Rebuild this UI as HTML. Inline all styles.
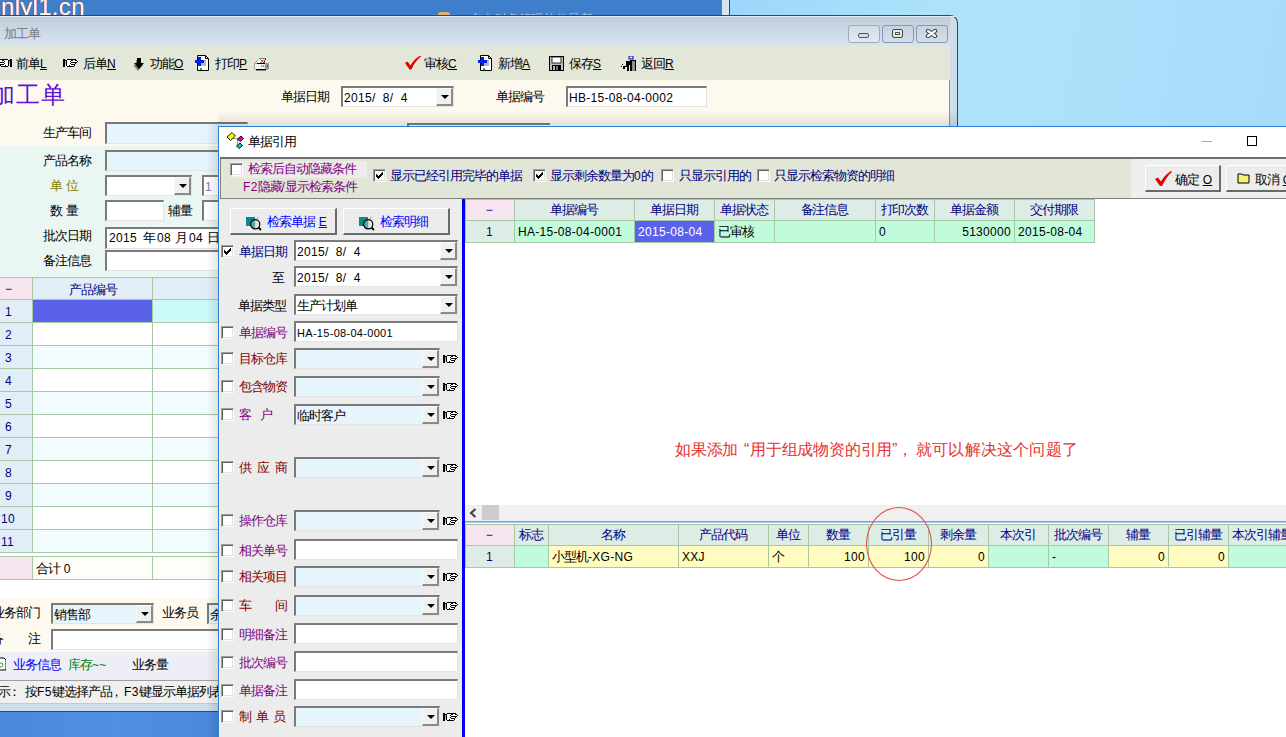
<!DOCTYPE html>
<html><head><meta charset="utf-8"><style>
*{box-sizing:border-box;margin:0;padding:0}
html,body{width:1286px;height:737px;overflow:hidden;position:relative;font-family:"Liberation Sans",sans-serif;font-size:12px;color:#000;background:#3d7ccc}
.a{position:absolute}
.t{position:absolute;white-space:nowrap;line-height:14px;letter-spacing:0.3px}
.inp{position:absolute;background:#fff;border-top:2px solid #7a7a7a;border-left:2px solid #7a7a7a;border-bottom:1px solid #e4e4e4;border-right:1px solid #e4e4e4;overflow:hidden;white-space:nowrap;line-height:20px;padding-left:1px;letter-spacing:0.3px}
.lb{background:#e6f4fc}
.btn{position:absolute;top:0;bottom:0;right:0;width:17px;background:#f0f0f0;border-top:1px solid #fafafa;border-left:1px solid #fafafa;border-right:2px solid #8a8a8a;border-bottom:2px solid #8a8a8a}
.btn:after{content:"";position:absolute;left:4px;top:6px;border-left:4px solid transparent;border-right:4px solid transparent;border-top:4px solid #000}
.cb{position:absolute;width:13px;height:13px;background:#fff;border:1px solid #fcfcfc;border-top-color:#a0a0a0;border-left-color:#a0a0a0;box-shadow:inset 1px 1px 0 #606060,inset -1px -1px 0 #e0e0e0}
u{text-decoration:underline}
.c{font-size:1.0833em;letter-spacing:-0.077em}
</style></head><body>
<div class="a" style="left:0px;top:0px;width:722px;height:15px;background:#3f7ecb"></div>
<div class="a" style="left:722px;top:0px;width:7px;height:15px;background:#d8e4f0"></div>
<div class="a" style="left:729px;top:0px;width:1px;height:15px;background:#444"></div>
<div class="a" style="left:730px;top:0px;width:556px;height:126px;background:linear-gradient(100deg,#9cd6fa,#aee4fa 40%,#a6dcfa)"></div>
<div class="t" style="left:1px;top:-7px;font-size:24px;line-height:28px;color:#fffbe0;text-shadow:-0.5px 0 #e03040">nlyl1.cn</div>
<div class="a" style="left:438px;top:12px;width:12px;height:3px;background:#e8b070;border-radius:5px 5px 0 0"></div>
<div class="a" style="left:470px;top:12px;width:130px;height:3px;overflow:hidden"><div class="t" style="left:0;top:0;color:#b8cce8">点击财务管理软件最新</div></div>
<div class="a" style="left:0px;top:712px;width:230px;height:25px;background:linear-gradient(90deg,#4a88dc,#5090e0 50%,#4a88da)"></div>
<div class="a" style="left:0px;top:15px;width:958px;height:697px;background:#cfdcea;border:1px solid #444;border-left:none;border-radius:0 8px 0 0"></div>
<div class="a" style="left:0px;top:16px;width:956px;height:1px;background:#e4ecf4"></div>
<div class="a" style="left:0px;top:17px;width:950px;height:29px;background:linear-gradient(#bfcddb,#d8e4f0)"></div>
<div class="t" style="left:4px;top:27px;color:#7a7a7a"><span class="c">加工单</span></div>
<div class="a" style="left:848px;top:25px;width:32px;height:18px;border:1px solid #a0acbc;border-radius:3px;background:linear-gradient(#d2dde8,#dfe9f3)"></div>
<div class="a" style="left:858px;top:33px;width:11px;height:5px;border:1px solid #555;border-radius:2px;background:#ddd"></div>
<div class="a" style="left:882px;top:25px;width:32px;height:18px;border:1px solid #8a98ae;border-radius:3px;background:linear-gradient(#c6d2e0,#d4dfec)"></div>
<div class="a" style="left:892px;top:29px;width:11px;height:9px;border:1px solid #444;border-radius:2px;background:#e8e8e8"></div>
<div class="a" style="left:895px;top:32px;width:5px;height:3px;border:1px solid #555;background:#dde4ec"></div>
<div class="a" style="left:916px;top:25px;width:32px;height:18px;border:1px solid #8a98ae;border-radius:3px;background:linear-gradient(#c6d2e0,#d4dfec)"></div>
<svg class="a" style="left:925px;top:28px" width="13" height="11" viewBox="0 0 13 11"><path d="M3 3L10 8M10 3L3 8" stroke="#3c4450" stroke-width="4.4" stroke-linecap="round"/><path d="M3 3L10 8M10 3L3 8" stroke="#fafafa" stroke-width="2.2" stroke-linecap="round"/></svg>
<div class="a" style="left:0px;top:46px;width:950px;height:34px;background:#e3e7d7"></div>
<svg class="a" style="left:-4px;top:59px" width="16" height="8" viewBox="0 0 16 8" shape-rendering="crispEdges"><rect x="3" y="0" width="9" height="1" fill="#000"/><rect x="14" y="0" width="2" height="1" fill="#000"/><rect x="2" y="1" width="2" height="1" fill="#000"/><rect x="4" y="1" width="2" height="1" fill="#fff"/><rect x="6" y="1" width="2" height="1" fill="#000"/><rect x="8" y="1" width="4" height="1" fill="#fff"/><rect x="12" y="1" width="4" height="1" fill="#000"/><rect x="1" y="2" width="1" height="1" fill="#000"/><rect x="2" y="2" width="6" height="1" fill="#fff"/><rect x="8" y="2" width="1" height="1" fill="#000"/><rect x="9" y="2" width="3" height="1" fill="#fff"/><rect x="12" y="2" width="1" height="1" fill="#000"/><rect x="13" y="2" width="1" height="1" fill="#10f0f8"/><rect x="14" y="2" width="2" height="1" fill="#000"/><rect x="2" y="3" width="6" height="1" fill="#000"/><rect x="8" y="3" width="4" height="1" fill="#fff"/><rect x="12" y="3" width="1" height="1" fill="#000"/><rect x="13" y="3" width="1" height="1" fill="#10f0f8"/><rect x="14" y="3" width="2" height="1" fill="#000"/><rect x="3" y="4" width="1" height="1" fill="#000"/><rect x="4" y="4" width="4" height="1" fill="#fff"/><rect x="8" y="4" width="1" height="1" fill="#000"/><rect x="9" y="4" width="3" height="1" fill="#fff"/><rect x="12" y="4" width="1" height="1" fill="#000"/><rect x="13" y="4" width="1" height="1" fill="#10f0f8"/><rect x="14" y="4" width="2" height="1" fill="#000"/><rect x="4" y="5" width="4" height="1" fill="#000"/><rect x="8" y="5" width="4" height="1" fill="#fff"/><rect x="12" y="5" width="1" height="1" fill="#000"/><rect x="13" y="5" width="1" height="1" fill="#e0b0b0"/><rect x="14" y="5" width="2" height="1" fill="#000"/><rect x="4" y="6" width="1" height="1" fill="#000"/><rect x="5" y="6" width="4" height="1" fill="#fff"/><rect x="9" y="6" width="1" height="1" fill="#000"/><rect x="10" y="6" width="2" height="1" fill="#fff"/><rect x="12" y="6" width="1" height="1" fill="#000"/><rect x="14" y="6" width="2" height="1" fill="#000"/><rect x="5" y="7" width="7" height="1" fill="#000"/><rect x="14" y="7" width="2" height="1" fill="#000"/></svg>
<div class="t" style="left:16px;top:57px;"><span class="c">前单</span><u>L</u></div>
<svg class="a" style="left:63px;top:59px" width="16" height="8" viewBox="0 0 16 8" shape-rendering="crispEdges"><rect x="0" y="0" width="2" height="1" fill="#000"/><rect x="4" y="0" width="9" height="1" fill="#000"/><rect x="0" y="1" width="4" height="1" fill="#000"/><rect x="4" y="1" width="4" height="1" fill="#fff"/><rect x="8" y="1" width="2" height="1" fill="#000"/><rect x="10" y="1" width="2" height="1" fill="#fff"/><rect x="12" y="1" width="2" height="1" fill="#000"/><rect x="0" y="2" width="2" height="1" fill="#000"/><rect x="2" y="2" width="1" height="1" fill="#10f0f8"/><rect x="3" y="2" width="1" height="1" fill="#000"/><rect x="4" y="2" width="3" height="1" fill="#fff"/><rect x="7" y="2" width="1" height="1" fill="#000"/><rect x="8" y="2" width="6" height="1" fill="#fff"/><rect x="14" y="2" width="1" height="1" fill="#000"/><rect x="0" y="3" width="2" height="1" fill="#000"/><rect x="2" y="3" width="1" height="1" fill="#10f0f8"/><rect x="3" y="3" width="1" height="1" fill="#000"/><rect x="4" y="3" width="4" height="1" fill="#fff"/><rect x="8" y="3" width="6" height="1" fill="#000"/><rect x="0" y="4" width="2" height="1" fill="#000"/><rect x="2" y="4" width="1" height="1" fill="#10f0f8"/><rect x="3" y="4" width="1" height="1" fill="#000"/><rect x="4" y="4" width="3" height="1" fill="#fff"/><rect x="7" y="4" width="1" height="1" fill="#000"/><rect x="8" y="4" width="4" height="1" fill="#fff"/><rect x="12" y="4" width="1" height="1" fill="#000"/><rect x="0" y="5" width="2" height="1" fill="#000"/><rect x="2" y="5" width="1" height="1" fill="#e0b0b0"/><rect x="3" y="5" width="1" height="1" fill="#000"/><rect x="4" y="5" width="4" height="1" fill="#fff"/><rect x="8" y="5" width="4" height="1" fill="#000"/><rect x="0" y="6" width="2" height="1" fill="#000"/><rect x="3" y="6" width="1" height="1" fill="#000"/><rect x="4" y="6" width="2" height="1" fill="#fff"/><rect x="6" y="6" width="1" height="1" fill="#000"/><rect x="7" y="6" width="4" height="1" fill="#fff"/><rect x="11" y="6" width="1" height="1" fill="#000"/><rect x="0" y="7" width="2" height="1" fill="#000"/><rect x="4" y="7" width="7" height="1" fill="#000"/></svg>
<div class="t" style="left:83px;top:57px;"><span class="c">后单</span><u>N</u></div>
<svg class="a" style="left:132px;top:58px" width="14" height="13" viewBox="0 0 14 13"><path d="M5 1h4v5h3l-5 6l-5-6h3z" fill="#808080" transform="translate(-1,1)"/><path d="M5 0h4v5h3l-5 6l-5-6h3z" fill="#000"/></svg>
<div class="t" style="left:150px;top:57px;"><span class="c">功能</span><u>O</u></div>
<svg class="a" style="left:195px;top:55px" width="15" height="16" viewBox="0 0 15 16"><path d="M2.5 0.5h8l3 3v12h-11z" fill="#fff" stroke="#000"/><path d="M10.5 0.5v3h3" fill="none" stroke="#000"/><rect x="5" y="5" width="6" height="6" fill="#b8b8b8"/><rect x="3" y="2" width="3" height="9" fill="#0020f0"/><rect x="0" y="5" width="9" height="3" fill="#0020f0"/><rect x="5" y="13" width="2" height="2" fill="#20c020"/></svg>
<div class="t" style="left:215px;top:57px;"><span class="c">打印</span><u>P</u></div>
<svg class="a" style="left:253px;top:57px" width="17" height="14" viewBox="0 0 17 14"><path d="M6 2h7l-1 4.5h-8z" fill="#fff"/><path d="M6 1.5h7" stroke="#808080"/><path d="M5.5 2L1.5 6.5" stroke="#a0a0a0"/><path d="M7.5 2.5l3.5 3.5M11 2.5l-3.5 3.5" stroke="#f00" stroke-width="1"/><rect x="12" y="2" width="1" height="1" fill="#000"/><rect x="11" y="3.5" width="1" height="2" fill="#000"/><rect x="1.5" y="6.5" width="14" height="6" rx="1.2" fill="#f4f4f4" stroke="#a0a0a0"/><rect x="4" y="6" width="8" height="1" fill="#000"/><rect x="12" y="6" width="4" height="6" fill="#9a9a9a"/><rect x="14" y="8.5" width="1" height="1" fill="#000"/><rect x="3" y="12" width="10" height="1.4" fill="#000"/><rect x="8" y="8.5" width="1.2" height="1.2" fill="#f00"/><rect x="10" y="8.5" width="1.2" height="1.2" fill="#f00"/></svg>
<svg class="a" style="left:405px;top:56px" width="16" height="14" viewBox="0 0 16 14"><path d="M0 7l2.5-1.5l3 4c3-5 6-8 10-10l0.5 1c-4 3-7 7-9.5 13h-2z" fill="#e80000"/></svg>
<div class="t" style="left:424px;top:57px;"><span class="c">审核</span><u>C</u></div>
<svg class="a" style="left:478px;top:55px" width="15" height="16" viewBox="0 0 15 16"><path d="M2.5 0.5h8l3 3v12h-11z" fill="#fff" stroke="#000"/><path d="M10.5 0.5v3h3" fill="none" stroke="#000"/><rect x="5" y="5" width="6" height="6" fill="#b8b8b8"/><rect x="3" y="2" width="3" height="9" fill="#0020f0"/><rect x="0" y="5" width="9" height="3" fill="#0020f0"/><rect x="5" y="13" width="2" height="2" fill="#20c020"/></svg>
<div class="t" style="left:498px;top:57px;"><span class="c">新增</span><u>A</u></div>
<svg class="a" style="left:549px;top:56px" width="15" height="15" viewBox="0 0 15 15"><rect x="0.5" y="0.5" width="14" height="14" fill="#c0c0c0" stroke="#000"/><rect x="3" y="1" width="9" height="6" fill="#fff" stroke="#000" stroke-width="0.8"/><rect x="3" y="9" width="9" height="5" fill="#000"/><rect x="4" y="10" width="2" height="4" fill="#b0b0b0"/><rect x="7" y="10" width="2" height="4" fill="#707070"/></svg>
<div class="t" style="left:569px;top:57px;"><span class="c">保存</span><u>S</u></div>
<svg class="a" style="left:621px;top:56px" width="15" height="15" viewBox="0 0 15 15"><rect x="8" y="0" width="4" height="3" fill="none" stroke="#0010c0"/><rect x="9" y="4" width="6" height="11" fill="#000"/><rect x="11" y="5" width="3" height="10" fill="#909090"/><path d="M5 5h4v4h-1v6h-2v-4h-2v2h-2v-3h3z" fill="#000"/><rect x="0" y="10" width="1" height="1" fill="#000"/><rect x="1" y="8" width="1" height="1" fill="#000"/></svg>
<div class="t" style="left:641px;top:57px;"><span class="c">返回</span><u>R</u></div>
<div class="a" style="left:0px;top:80px;width:950px;height:66px;background:#fdf9ee"></div>
<div class="a" style="left:0px;top:146px;width:950px;height:132px;background:#eaf6f1"></div>
<div class="a" style="left:949px;top:80px;width:1px;height:46px;background:#909090"></div>
<div class="t" style="left:-9px;top:81px;font-size:24px;line-height:28px;color:#6010d8;letter-spacing:1px">加工单</div>
<div class="t" style="left:281px;top:90px;"><span class="c">单据日期</span></div>
<div class="inp" style="left:341px;top:86px;width:113px;height:21px">2015/&nbsp; 8/&nbsp; 4<div class="btn"></div></div>
<div class="t" style="left:496px;top:90px;"><span class="c">单据编号</span></div>
<div class="inp" style="left:566px;top:86px;width:141px;height:21px">HB-15-08-04-0002</div>
<div class="a" style="left:407px;top:123px;width:143px;height:4px;border-top:2px solid #7c7c7c;border-left:2px solid #7c7c7c;background:#fff"></div>
<div class="t" style="left:43px;top:126px;"><span class="c">生产车间</span></div>
<div class="inp lb" style="left:105px;top:122px;width:143px;height:22px"></div>
<div class="t" style="left:43px;top:154px;"><span class="c">产品名称</span></div>
<div class="inp lb" style="left:105px;top:150px;width:143px;height:21px"></div>
<div class="t" style="left:50px;top:179px;color:#808000"><span class="c">单</span> <span class="c">位</span></div>
<div class="inp" style="left:105px;top:175px;width:87px;height:21px"><div class="btn"></div></div>
<div class="inp" style="left:202px;top:175px;width:30px;height:21px;color:#8878a8">1</div>
<div class="t" style="left:50px;top:204px;"><span class="c">数</span> <span class="c">量</span></div>
<div class="inp" style="left:105px;top:200px;width:59px;height:21px"></div>
<div class="t" style="left:168px;top:204px;"><span class="c">辅量</span></div>
<div class="inp" style="left:202px;top:200px;width:30px;height:21px"></div>
<div class="t" style="left:43px;top:229px;"><span class="c">批次日期</span></div>
<div class="inp" style="left:105px;top:227px;width:143px;height:22px"></div>
<div class="t" style="left:109px;top:231px;">2015</div>
<div class="t" style="left:143px;top:231px;"><span class="c">年</span></div>
<div class="t" style="left:157px;top:231px;">08</div>
<div class="t" style="left:175px;top:231px;"><span class="c">月</span></div>
<div class="t" style="left:189px;top:231px;">04</div>
<div class="t" style="left:207px;top:231px;"><span class="c">日</span></div>
<div class="t" style="left:43px;top:254px;"><span class="c">备注信息</span></div>
<div class="inp" style="left:105px;top:250px;width:143px;height:21px"></div>
<div class="a" style="left:0px;top:277px;width:950px;height:321px;background:#fff"></div>
<div class="a" style="left:0px;top:277px;width:253px;height:1px;background:#a6c8a6"></div>
<div class="a" style="left:0px;top:278px;width:33px;height:22px;background:#f6e4ee;border-right:1px solid #a6c8a6;border-bottom:1px solid #a6c8a6"></div>
<div class="t" style="left:5px;top:282px;color:#000080">−</div>
<div class="a" style="left:33px;top:278px;width:120px;height:22px;background:#e2eef6;border-right:1px solid #a6c8a6;border-bottom:1px solid #a6c8a6"></div>
<div class="t" style="left:69px;top:283px;color:#000080"><span class="c">产品编号</span></div>
<div class="a" style="left:153px;top:278px;width:100px;height:22px;background:#e2eef6;border-bottom:1px solid #a6c8a6"></div>
<div class="a" style="left:0px;top:300px;width:33px;height:23px;background:#e2eef6;border-right:1px solid #a6c8a6;border-bottom:1px solid #a6c8a6"></div>
<div class="t" style="left:5px;top:305px;color:#000080">1</div>
<div class="a" style="left:33px;top:300px;width:120px;height:23px;background:#5a62ea;border-right:1px solid #a6c8a6;border-bottom:1px solid #a6c8a6"></div>
<div class="a" style="left:153px;top:300px;width:100px;height:23px;background:#ccfaf8;border-bottom:1px solid #a6c8a6"></div>
<div class="a" style="left:0px;top:323px;width:33px;height:23px;background:#e2eef6;border-right:1px solid #a6c8a6;border-bottom:1px solid #a6c8a6"></div>
<div class="t" style="left:5px;top:328px;color:#000080">2</div>
<div class="a" style="left:33px;top:323px;width:120px;height:23px;background:#fff;border-right:1px solid #a6c8a6;border-bottom:1px solid #a6c8a6"></div>
<div class="a" style="left:153px;top:323px;width:100px;height:23px;background:#fff;border-bottom:1px solid #a6c8a6"></div>
<div class="a" style="left:0px;top:346px;width:33px;height:23px;background:#e2eef6;border-right:1px solid #a6c8a6;border-bottom:1px solid #a6c8a6"></div>
<div class="t" style="left:5px;top:351px;color:#000080">3</div>
<div class="a" style="left:33px;top:346px;width:120px;height:23px;background:#f2fcfe;border-right:1px solid #a6c8a6;border-bottom:1px solid #a6c8a6"></div>
<div class="a" style="left:153px;top:346px;width:100px;height:23px;background:#f2fcfe;border-bottom:1px solid #a6c8a6"></div>
<div class="a" style="left:0px;top:369px;width:33px;height:23px;background:#e2eef6;border-right:1px solid #a6c8a6;border-bottom:1px solid #a6c8a6"></div>
<div class="t" style="left:5px;top:374px;color:#000080">4</div>
<div class="a" style="left:33px;top:369px;width:120px;height:23px;background:#fff;border-right:1px solid #a6c8a6;border-bottom:1px solid #a6c8a6"></div>
<div class="a" style="left:153px;top:369px;width:100px;height:23px;background:#fff;border-bottom:1px solid #a6c8a6"></div>
<div class="a" style="left:0px;top:392px;width:33px;height:23px;background:#e2eef6;border-right:1px solid #a6c8a6;border-bottom:1px solid #a6c8a6"></div>
<div class="t" style="left:5px;top:397px;color:#000080">5</div>
<div class="a" style="left:33px;top:392px;width:120px;height:23px;background:#f2fcfe;border-right:1px solid #a6c8a6;border-bottom:1px solid #a6c8a6"></div>
<div class="a" style="left:153px;top:392px;width:100px;height:23px;background:#f2fcfe;border-bottom:1px solid #a6c8a6"></div>
<div class="a" style="left:0px;top:415px;width:33px;height:23px;background:#e2eef6;border-right:1px solid #a6c8a6;border-bottom:1px solid #a6c8a6"></div>
<div class="t" style="left:5px;top:420px;color:#000080">6</div>
<div class="a" style="left:33px;top:415px;width:120px;height:23px;background:#fff;border-right:1px solid #a6c8a6;border-bottom:1px solid #a6c8a6"></div>
<div class="a" style="left:153px;top:415px;width:100px;height:23px;background:#fff;border-bottom:1px solid #a6c8a6"></div>
<div class="a" style="left:0px;top:438px;width:33px;height:23px;background:#e2eef6;border-right:1px solid #a6c8a6;border-bottom:1px solid #a6c8a6"></div>
<div class="t" style="left:5px;top:443px;color:#000080">7</div>
<div class="a" style="left:33px;top:438px;width:120px;height:23px;background:#f2fcfe;border-right:1px solid #a6c8a6;border-bottom:1px solid #a6c8a6"></div>
<div class="a" style="left:153px;top:438px;width:100px;height:23px;background:#f2fcfe;border-bottom:1px solid #a6c8a6"></div>
<div class="a" style="left:0px;top:461px;width:33px;height:23px;background:#e2eef6;border-right:1px solid #a6c8a6;border-bottom:1px solid #a6c8a6"></div>
<div class="t" style="left:5px;top:466px;color:#000080">8</div>
<div class="a" style="left:33px;top:461px;width:120px;height:23px;background:#fff;border-right:1px solid #a6c8a6;border-bottom:1px solid #a6c8a6"></div>
<div class="a" style="left:153px;top:461px;width:100px;height:23px;background:#fff;border-bottom:1px solid #a6c8a6"></div>
<div class="a" style="left:0px;top:484px;width:33px;height:23px;background:#e2eef6;border-right:1px solid #a6c8a6;border-bottom:1px solid #a6c8a6"></div>
<div class="t" style="left:5px;top:489px;color:#000080">9</div>
<div class="a" style="left:33px;top:484px;width:120px;height:23px;background:#f2fcfe;border-right:1px solid #a6c8a6;border-bottom:1px solid #a6c8a6"></div>
<div class="a" style="left:153px;top:484px;width:100px;height:23px;background:#f2fcfe;border-bottom:1px solid #a6c8a6"></div>
<div class="a" style="left:0px;top:507px;width:33px;height:23px;background:#e2eef6;border-right:1px solid #a6c8a6;border-bottom:1px solid #a6c8a6"></div>
<div class="t" style="left:1px;top:512px;color:#000080">10</div>
<div class="a" style="left:33px;top:507px;width:120px;height:23px;background:#fff;border-right:1px solid #a6c8a6;border-bottom:1px solid #a6c8a6"></div>
<div class="a" style="left:153px;top:507px;width:100px;height:23px;background:#fff;border-bottom:1px solid #a6c8a6"></div>
<div class="a" style="left:0px;top:530px;width:33px;height:23px;background:#e2eef6;border-right:1px solid #a6c8a6;border-bottom:1px solid #a6c8a6"></div>
<div class="t" style="left:1px;top:535px;color:#000080">11</div>
<div class="a" style="left:33px;top:530px;width:120px;height:23px;background:#f2fcfe;border-right:1px solid #a6c8a6;border-bottom:1px solid #a6c8a6"></div>
<div class="a" style="left:153px;top:530px;width:100px;height:23px;background:#f2fcfe;border-bottom:1px solid #a6c8a6"></div>
<div class="a" style="left:0px;top:553px;width:253px;height:4px;background:#fff;border-bottom:1px solid #a6c8a6"></div>
<div class="a" style="left:0px;top:557px;width:33px;height:23px;background:#f6e4ee;border-right:1px solid #a6c8a6;border-bottom:1px solid #a6c8a6"></div>
<div class="a" style="left:33px;top:557px;width:120px;height:23px;background:#fefef8;border-right:1px solid #a6c8a6;border-bottom:1px solid #a6c8a6"></div>
<div class="a" style="left:153px;top:557px;width:100px;height:23px;background:#fefef8;border-bottom:1px solid #a6c8a6"></div>
<div class="t" style="left:36px;top:562px;"><span class="c">合计</span> 0</div>
<div class="a" style="left:0px;top:598px;width:950px;height:54px;background:#fdf9ee"></div>
<div class="t" style="left:-8px;top:606px;"><span class="c">业务部门</span></div>
<div class="inp lb" style="left:51px;top:603px;width:103px;height:21px"><span class="c">销售部</span><div class="btn"></div></div>
<div class="t" style="left:162px;top:606px;"><span class="c">业务员</span></div>
<div class="inp lb" style="left:207px;top:603px;width:40px;height:21px"><span class="c">余</span></div>
<div class="t" style="left:-9px;top:632px;"><span class="c">备</span></div>
<div class="t" style="left:28px;top:632px;"><span class="c">注</span></div>
<div class="inp" style="left:51px;top:629px;width:200px;height:21px"></div>
<div class="a" style="left:0px;top:652px;width:950px;height:28px;background:#eeeef7"></div>
<svg class="a" style="left:0;top:657px" width="6" height="14" viewBox="0 0 6 14"><path d="M-4 1h8l2 2v10h-10" fill="#fff" stroke="#000"/><circle cx="1" cy="8" r="2" fill="none" stroke="#2a2"/></svg>
<div class="t" style="left:13px;top:658px;color:#0000ff"><span class="c">业务信息</span></div>
<div class="t" style="left:68px;top:658px;color:#008000"><span class="c">库存</span>~~</div>
<div class="t" style="left:132px;top:658px;"><span class="c">业务量</span></div>
<div class="a" style="left:0px;top:680px;width:950px;height:24px;background:#f0f0f0;border-top:1px solid #a0a0a0;border-bottom:1px solid #c8c8c8"></div>
<div class="t" style="left:-2px;top:685px;"><span class="c">示</span></div>
<div class="t" style="left:8px;top:685px;"><span class="c">：</span></div>
<div class="t" style="left:25px;top:685px;"><span class="c">按</span>F5<span class="c">键选择产品</span></div>
<div class="t" style="left:110px;top:685px;"><span class="c">，</span></div>
<div class="t" style="left:124px;top:685px;">F3<span class="c">键显示单据列表</span></div>
<div class="a" style="left:206px;top:122px;width:12px;height:615px;background:linear-gradient(90deg,rgba(0,0,0,0),rgba(0,0,0,0.1))"></div>
<div class="a" style="left:218px;top:111px;width:740px;height:15px;background:linear-gradient(rgba(0,0,0,0),rgba(0,0,0,0.1))"></div>
<div class="a" style="left:218px;top:126px;width:1070px;height:620px;background:#fff;border-left:1px solid #2a80d8;border-top:1px solid #2a80d8"></div>
<div class="a" style="left:219px;top:158px;width:1px;height:600px;background:#f8f4ea"></div>
<svg class="a" style="left:226px;top:132px" width="19" height="18" viewBox="226 132 19 18"><path d="M233 138.5h4.5v7" stroke="#a0a0a0" stroke-width="1.2" fill="none"/><path d="M227 137l5-4.5l3.5 3.5l-5 4.5z" fill="#f8f800" stroke="#000" stroke-width="0.9"/><path d="M237.5 139l3.5-3l2.5 2.5l-3.5 3z" fill="#e000c0" stroke="#000" stroke-width="0.9"/><path d="M236.5 146l3.5-3l2.5 2.5l-3.5 3z" fill="#00c8d8" stroke="#000" stroke-width="0.9"/></svg>
<div class="t" style="left:248px;top:135px;"><span class="c">单据引用</span></div>
<div class="a" style="left:1202px;top:141px;width:10px;height:1px;background:#aaa"></div>
<div class="a" style="left:1247px;top:136px;width:10px;height:10px;border:1px solid #000"></div>
<div class="a" style="left:220px;top:157px;width:1070px;height:42px;background:#e2e6d6;border-top:2px solid #707070;border-bottom:1px solid #808080;border-left:1px solid #808080"></div>
<div class="a" style="left:1131px;top:159px;width:160px;height:39px;background:#efefef"></div>
<div class="a" style="left:230px;top:161px;width:137px;height:17px;background:#ececec"></div>
<div class="cb" style="left:230px;top:163px"></div>
<div class="t" style="left:248px;top:162px;color:#800080"><span class="c">检索后自动隐藏条件</span></div>
<div class="t" style="left:243px;top:180px;color:#800080">F2<span class="c">隐藏</span>/<span class="c">显示检索条件</span></div>
<div class="cb" style="left:373px;top:169px"></div><svg class="a" style="left:376px;top:172px" width="7" height="7" viewBox="0 0 7 7" shape-rendering="crispEdges"><rect x="6" y="0" width="1" height="1" fill="#000"/><rect x="5" y="1" width="2" height="1" fill="#000"/><rect x="0" y="2" width="1" height="1" fill="#000"/><rect x="4" y="2" width="3" height="1" fill="#000"/><rect x="0" y="3" width="2" height="1" fill="#000"/><rect x="3" y="3" width="3" height="1" fill="#000"/><rect x="0" y="4" width="5" height="1" fill="#000"/><rect x="1" y="5" width="3" height="1" fill="#000"/><rect x="2" y="6" width="1" height="1" fill="#000"/></svg>
<div class="t" style="left:390px;top:169px;color:#000080"><span class="c">显示已经引用完毕的单据</span></div>
<div class="cb" style="left:533px;top:169px"></div><svg class="a" style="left:536px;top:172px" width="7" height="7" viewBox="0 0 7 7" shape-rendering="crispEdges"><rect x="6" y="0" width="1" height="1" fill="#000"/><rect x="5" y="1" width="2" height="1" fill="#000"/><rect x="0" y="2" width="1" height="1" fill="#000"/><rect x="4" y="2" width="3" height="1" fill="#000"/><rect x="0" y="3" width="2" height="1" fill="#000"/><rect x="3" y="3" width="3" height="1" fill="#000"/><rect x="0" y="4" width="5" height="1" fill="#000"/><rect x="1" y="5" width="3" height="1" fill="#000"/><rect x="2" y="6" width="1" height="1" fill="#000"/></svg>
<div class="t" style="left:550px;top:169px;color:#000080"><span class="c">显示剩余数量为</span>0<span class="c">的</span></div>
<div class="cb" style="left:661px;top:169px"></div>
<div class="t" style="left:679px;top:169px;color:#000080"><span class="c">只显示引用的</span></div>
<div class="cb" style="left:757px;top:169px"></div>
<div class="t" style="left:774px;top:169px;color:#000080"><span class="c">只显示检索物资的明细</span></div>
<div class="a" style="left:1145px;top:165px;width:76px;height:27px;background:#ececec;border-top:1px solid #fff;border-left:1px solid #fff;border-right:2px solid #6a6a6a;border-bottom:2px solid #6a6a6a"></div>
<svg class="a" style="left:1155px;top:171px" width="17" height="15" viewBox="0 0 17 15"><path d="M0 8l3-1.5l3 4c3-5 6-8 10-10.5l1 1c-4 3-7 8-10 14h-2z" fill="#e80000"/></svg>
<div class="t" style="left:1175px;top:173px;"><span class="c">确定</span> <u>O</u></div>
<div class="a" style="left:1226px;top:165px;width:80px;height:27px;background:#ececec;border-top:1px solid #fff;border-left:1px solid #fff;border-bottom:2px solid #6a6a6a"></div>
<svg class="a" style="left:1237px;top:172px" width="14" height="12" viewBox="0 0 14 12"><path d="M1 2h4l1 1h6v8h-11z" fill="#f8f070" stroke="#000"/></svg>
<div class="t" style="left:1255px;top:173px;"><span class="c">取消</span> <u>O</u></div>
<div class="a" style="left:220px;top:199px;width:242px;height:540px;background:#ececec"></div>
<div class="a" style="left:462px;top:199px;width:3px;height:540px;background:#0000f0"></div>
<div class="a" style="left:230px;top:208px;width:107px;height:27px;background:#ececec;border-top:1px solid #fff;border-left:1px solid #fff;border-right:2px solid #6a6a6a;border-bottom:2px solid #6a6a6a"></div>
<svg class="a" style="left:246px;top:215px" width="17" height="16" viewBox="0 0 17 16"><defs><linearGradient id="mg230"><stop offset="0.45" stop-color="#5aa8a8"/><stop offset="0.55" stop-color="#e4e4e4"/></linearGradient></defs><rect x="0" y="2" width="9" height="9" fill="#088888"/><path d="M9 5L12.5 0.5L12.5 5z" fill="#c0c0c0"/><circle cx="9.2" cy="9.2" r="4.6" fill="url(#mg230)" stroke="#000" stroke-width="1.2"/><path d="M12.5 12.5l2.5 2.5" stroke="#000" stroke-width="2"/></svg>
<div class="t" style="left:267px;top:215px;color:#0000ff"><span class="c">检索单据</span> <u>E</u></div>
<div class="a" style="left:343px;top:208px;width:107px;height:27px;background:#ececec;border-top:1px solid #fff;border-left:1px solid #fff;border-right:2px solid #6a6a6a;border-bottom:2px solid #6a6a6a"></div>
<svg class="a" style="left:359px;top:215px" width="17" height="16" viewBox="0 0 17 16"><defs><linearGradient id="mg343"><stop offset="0.45" stop-color="#5aa8a8"/><stop offset="0.55" stop-color="#e4e4e4"/></linearGradient></defs><rect x="0" y="2" width="9" height="9" fill="#088888"/><path d="M9 5L12.5 0.5L12.5 5z" fill="#c0c0c0"/><circle cx="9.2" cy="9.2" r="4.6" fill="url(#mg343)" stroke="#000" stroke-width="1.2"/><path d="M12.5 12.5l2.5 2.5" stroke="#000" stroke-width="2"/></svg>
<div class="t" style="left:380px;top:215px;color:#0000ff"><span class="c">检索明细</span></div>
<div class="cb" style="left:221px;top:245px"></div><svg class="a" style="left:224px;top:248px" width="7" height="7" viewBox="0 0 7 7" shape-rendering="crispEdges"><rect x="6" y="0" width="1" height="1" fill="#000"/><rect x="5" y="1" width="2" height="1" fill="#000"/><rect x="0" y="2" width="1" height="1" fill="#000"/><rect x="4" y="2" width="3" height="1" fill="#000"/><rect x="0" y="3" width="2" height="1" fill="#000"/><rect x="3" y="3" width="3" height="1" fill="#000"/><rect x="0" y="4" width="5" height="1" fill="#000"/><rect x="1" y="5" width="3" height="1" fill="#000"/><rect x="2" y="6" width="1" height="1" fill="#000"/></svg>
<div class="t" style="left:239px;top:245px;color:#000080"><span class="c">单据日期</span></div>
<div class="inp" style="left:294px;top:240px;width:164px;height:21px">2015/&nbsp; 8/&nbsp; 4<div class="btn"></div></div>
<div class="t" style="left:272px;top:271px;color:#000"><span class="c">至</span></div>
<div class="inp" style="left:294px;top:266px;width:164px;height:21px">2015/&nbsp; 8/&nbsp; 4<div class="btn"></div></div>
<div class="t" style="left:238px;top:299px;color:#000"><span class="c">单据类型</span></div>
<div class="inp" style="left:294px;top:294px;width:164px;height:21px"><span class="c">生产计划单</span><div class="btn"></div></div>
<div class="cb" style="left:221px;top:326px"></div>
<div class="t" style="left:239px;top:326px;color:#800080"><span class="c">单据编号</span></div>
<div class="inp" style="left:294px;top:321px;width:164px;height:21px;font-size:11px">HA-15-08-04-0001</div>
<div class="cb" style="left:221px;top:352px"></div>
<div class="t" style="left:239px;top:352px;color:#800000"><span class="c">目标仓库</span></div>
<div class="inp lb" style="left:294px;top:348px;width:146px;height:21px"><div class="btn"></div></div>
<svg class="a" style="left:443px;top:355px" width="16" height="8" viewBox="0 0 16 8" shape-rendering="crispEdges"><rect x="0" y="0" width="2" height="1" fill="#000"/><rect x="4" y="0" width="9" height="1" fill="#000"/><rect x="0" y="1" width="4" height="1" fill="#000"/><rect x="4" y="1" width="4" height="1" fill="#fff"/><rect x="8" y="1" width="2" height="1" fill="#000"/><rect x="10" y="1" width="2" height="1" fill="#fff"/><rect x="12" y="1" width="2" height="1" fill="#000"/><rect x="0" y="2" width="2" height="1" fill="#000"/><rect x="2" y="2" width="1" height="1" fill="#10f0f8"/><rect x="3" y="2" width="1" height="1" fill="#000"/><rect x="4" y="2" width="3" height="1" fill="#fff"/><rect x="7" y="2" width="1" height="1" fill="#000"/><rect x="8" y="2" width="6" height="1" fill="#fff"/><rect x="14" y="2" width="1" height="1" fill="#000"/><rect x="0" y="3" width="2" height="1" fill="#000"/><rect x="2" y="3" width="1" height="1" fill="#10f0f8"/><rect x="3" y="3" width="1" height="1" fill="#000"/><rect x="4" y="3" width="4" height="1" fill="#fff"/><rect x="8" y="3" width="6" height="1" fill="#000"/><rect x="0" y="4" width="2" height="1" fill="#000"/><rect x="2" y="4" width="1" height="1" fill="#10f0f8"/><rect x="3" y="4" width="1" height="1" fill="#000"/><rect x="4" y="4" width="3" height="1" fill="#fff"/><rect x="7" y="4" width="1" height="1" fill="#000"/><rect x="8" y="4" width="4" height="1" fill="#fff"/><rect x="12" y="4" width="1" height="1" fill="#000"/><rect x="0" y="5" width="2" height="1" fill="#000"/><rect x="2" y="5" width="1" height="1" fill="#e0b0b0"/><rect x="3" y="5" width="1" height="1" fill="#000"/><rect x="4" y="5" width="4" height="1" fill="#fff"/><rect x="8" y="5" width="4" height="1" fill="#000"/><rect x="0" y="6" width="2" height="1" fill="#000"/><rect x="3" y="6" width="1" height="1" fill="#000"/><rect x="4" y="6" width="2" height="1" fill="#fff"/><rect x="6" y="6" width="1" height="1" fill="#000"/><rect x="7" y="6" width="4" height="1" fill="#fff"/><rect x="11" y="6" width="1" height="1" fill="#000"/><rect x="0" y="7" width="2" height="1" fill="#000"/><rect x="4" y="7" width="7" height="1" fill="#000"/></svg>
<div class="cb" style="left:221px;top:380px"></div>
<div class="t" style="left:239px;top:380px;color:#800000"><span class="c">包含物资</span></div>
<div class="inp lb" style="left:294px;top:376px;width:146px;height:21px"><div class="btn"></div></div>
<svg class="a" style="left:443px;top:383px" width="16" height="8" viewBox="0 0 16 8" shape-rendering="crispEdges"><rect x="0" y="0" width="2" height="1" fill="#000"/><rect x="4" y="0" width="9" height="1" fill="#000"/><rect x="0" y="1" width="4" height="1" fill="#000"/><rect x="4" y="1" width="4" height="1" fill="#fff"/><rect x="8" y="1" width="2" height="1" fill="#000"/><rect x="10" y="1" width="2" height="1" fill="#fff"/><rect x="12" y="1" width="2" height="1" fill="#000"/><rect x="0" y="2" width="2" height="1" fill="#000"/><rect x="2" y="2" width="1" height="1" fill="#10f0f8"/><rect x="3" y="2" width="1" height="1" fill="#000"/><rect x="4" y="2" width="3" height="1" fill="#fff"/><rect x="7" y="2" width="1" height="1" fill="#000"/><rect x="8" y="2" width="6" height="1" fill="#fff"/><rect x="14" y="2" width="1" height="1" fill="#000"/><rect x="0" y="3" width="2" height="1" fill="#000"/><rect x="2" y="3" width="1" height="1" fill="#10f0f8"/><rect x="3" y="3" width="1" height="1" fill="#000"/><rect x="4" y="3" width="4" height="1" fill="#fff"/><rect x="8" y="3" width="6" height="1" fill="#000"/><rect x="0" y="4" width="2" height="1" fill="#000"/><rect x="2" y="4" width="1" height="1" fill="#10f0f8"/><rect x="3" y="4" width="1" height="1" fill="#000"/><rect x="4" y="4" width="3" height="1" fill="#fff"/><rect x="7" y="4" width="1" height="1" fill="#000"/><rect x="8" y="4" width="4" height="1" fill="#fff"/><rect x="12" y="4" width="1" height="1" fill="#000"/><rect x="0" y="5" width="2" height="1" fill="#000"/><rect x="2" y="5" width="1" height="1" fill="#e0b0b0"/><rect x="3" y="5" width="1" height="1" fill="#000"/><rect x="4" y="5" width="4" height="1" fill="#fff"/><rect x="8" y="5" width="4" height="1" fill="#000"/><rect x="0" y="6" width="2" height="1" fill="#000"/><rect x="3" y="6" width="1" height="1" fill="#000"/><rect x="4" y="6" width="2" height="1" fill="#fff"/><rect x="6" y="6" width="1" height="1" fill="#000"/><rect x="7" y="6" width="4" height="1" fill="#fff"/><rect x="11" y="6" width="1" height="1" fill="#000"/><rect x="0" y="7" width="2" height="1" fill="#000"/><rect x="4" y="7" width="7" height="1" fill="#000"/></svg>
<div class="cb" style="left:221px;top:408px"></div>
<div class="t" style="left:239px;top:408px;color:#800080"><span class="c">客</span></div>
<div class="t" style="left:260px;top:408px;color:#800080"><span class="c">户</span></div>
<div class="inp lb" style="left:294px;top:404px;width:146px;height:21px"><span class="c">临时客户</span><div class="btn"></div></div>
<svg class="a" style="left:443px;top:411px" width="16" height="8" viewBox="0 0 16 8" shape-rendering="crispEdges"><rect x="0" y="0" width="2" height="1" fill="#000"/><rect x="4" y="0" width="9" height="1" fill="#000"/><rect x="0" y="1" width="4" height="1" fill="#000"/><rect x="4" y="1" width="4" height="1" fill="#fff"/><rect x="8" y="1" width="2" height="1" fill="#000"/><rect x="10" y="1" width="2" height="1" fill="#fff"/><rect x="12" y="1" width="2" height="1" fill="#000"/><rect x="0" y="2" width="2" height="1" fill="#000"/><rect x="2" y="2" width="1" height="1" fill="#10f0f8"/><rect x="3" y="2" width="1" height="1" fill="#000"/><rect x="4" y="2" width="3" height="1" fill="#fff"/><rect x="7" y="2" width="1" height="1" fill="#000"/><rect x="8" y="2" width="6" height="1" fill="#fff"/><rect x="14" y="2" width="1" height="1" fill="#000"/><rect x="0" y="3" width="2" height="1" fill="#000"/><rect x="2" y="3" width="1" height="1" fill="#10f0f8"/><rect x="3" y="3" width="1" height="1" fill="#000"/><rect x="4" y="3" width="4" height="1" fill="#fff"/><rect x="8" y="3" width="6" height="1" fill="#000"/><rect x="0" y="4" width="2" height="1" fill="#000"/><rect x="2" y="4" width="1" height="1" fill="#10f0f8"/><rect x="3" y="4" width="1" height="1" fill="#000"/><rect x="4" y="4" width="3" height="1" fill="#fff"/><rect x="7" y="4" width="1" height="1" fill="#000"/><rect x="8" y="4" width="4" height="1" fill="#fff"/><rect x="12" y="4" width="1" height="1" fill="#000"/><rect x="0" y="5" width="2" height="1" fill="#000"/><rect x="2" y="5" width="1" height="1" fill="#e0b0b0"/><rect x="3" y="5" width="1" height="1" fill="#000"/><rect x="4" y="5" width="4" height="1" fill="#fff"/><rect x="8" y="5" width="4" height="1" fill="#000"/><rect x="0" y="6" width="2" height="1" fill="#000"/><rect x="3" y="6" width="1" height="1" fill="#000"/><rect x="4" y="6" width="2" height="1" fill="#fff"/><rect x="6" y="6" width="1" height="1" fill="#000"/><rect x="7" y="6" width="4" height="1" fill="#fff"/><rect x="11" y="6" width="1" height="1" fill="#000"/><rect x="0" y="7" width="2" height="1" fill="#000"/><rect x="4" y="7" width="7" height="1" fill="#000"/></svg>
<div class="cb" style="left:221px;top:461px"></div>
<div class="t" style="left:239px;top:461px;color:#800000"><span class="c">供</span></div>
<div class="t" style="left:257px;top:461px;color:#800000"><span class="c">应</span></div>
<div class="t" style="left:275px;top:461px;color:#800000"><span class="c">商</span></div>
<div class="inp lb" style="left:294px;top:457px;width:146px;height:21px"><div class="btn"></div></div>
<svg class="a" style="left:443px;top:464px" width="16" height="8" viewBox="0 0 16 8" shape-rendering="crispEdges"><rect x="0" y="0" width="2" height="1" fill="#000"/><rect x="4" y="0" width="9" height="1" fill="#000"/><rect x="0" y="1" width="4" height="1" fill="#000"/><rect x="4" y="1" width="4" height="1" fill="#fff"/><rect x="8" y="1" width="2" height="1" fill="#000"/><rect x="10" y="1" width="2" height="1" fill="#fff"/><rect x="12" y="1" width="2" height="1" fill="#000"/><rect x="0" y="2" width="2" height="1" fill="#000"/><rect x="2" y="2" width="1" height="1" fill="#10f0f8"/><rect x="3" y="2" width="1" height="1" fill="#000"/><rect x="4" y="2" width="3" height="1" fill="#fff"/><rect x="7" y="2" width="1" height="1" fill="#000"/><rect x="8" y="2" width="6" height="1" fill="#fff"/><rect x="14" y="2" width="1" height="1" fill="#000"/><rect x="0" y="3" width="2" height="1" fill="#000"/><rect x="2" y="3" width="1" height="1" fill="#10f0f8"/><rect x="3" y="3" width="1" height="1" fill="#000"/><rect x="4" y="3" width="4" height="1" fill="#fff"/><rect x="8" y="3" width="6" height="1" fill="#000"/><rect x="0" y="4" width="2" height="1" fill="#000"/><rect x="2" y="4" width="1" height="1" fill="#10f0f8"/><rect x="3" y="4" width="1" height="1" fill="#000"/><rect x="4" y="4" width="3" height="1" fill="#fff"/><rect x="7" y="4" width="1" height="1" fill="#000"/><rect x="8" y="4" width="4" height="1" fill="#fff"/><rect x="12" y="4" width="1" height="1" fill="#000"/><rect x="0" y="5" width="2" height="1" fill="#000"/><rect x="2" y="5" width="1" height="1" fill="#e0b0b0"/><rect x="3" y="5" width="1" height="1" fill="#000"/><rect x="4" y="5" width="4" height="1" fill="#fff"/><rect x="8" y="5" width="4" height="1" fill="#000"/><rect x="0" y="6" width="2" height="1" fill="#000"/><rect x="3" y="6" width="1" height="1" fill="#000"/><rect x="4" y="6" width="2" height="1" fill="#fff"/><rect x="6" y="6" width="1" height="1" fill="#000"/><rect x="7" y="6" width="4" height="1" fill="#fff"/><rect x="11" y="6" width="1" height="1" fill="#000"/><rect x="0" y="7" width="2" height="1" fill="#000"/><rect x="4" y="7" width="7" height="1" fill="#000"/></svg>
<div class="cb" style="left:221px;top:514px"></div>
<div class="t" style="left:239px;top:514px;color:#800080"><span class="c">操作仓库</span></div>
<div class="inp lb" style="left:294px;top:510px;width:146px;height:21px"><div class="btn"></div></div>
<svg class="a" style="left:443px;top:517px" width="16" height="8" viewBox="0 0 16 8" shape-rendering="crispEdges"><rect x="0" y="0" width="2" height="1" fill="#000"/><rect x="4" y="0" width="9" height="1" fill="#000"/><rect x="0" y="1" width="4" height="1" fill="#000"/><rect x="4" y="1" width="4" height="1" fill="#fff"/><rect x="8" y="1" width="2" height="1" fill="#000"/><rect x="10" y="1" width="2" height="1" fill="#fff"/><rect x="12" y="1" width="2" height="1" fill="#000"/><rect x="0" y="2" width="2" height="1" fill="#000"/><rect x="2" y="2" width="1" height="1" fill="#10f0f8"/><rect x="3" y="2" width="1" height="1" fill="#000"/><rect x="4" y="2" width="3" height="1" fill="#fff"/><rect x="7" y="2" width="1" height="1" fill="#000"/><rect x="8" y="2" width="6" height="1" fill="#fff"/><rect x="14" y="2" width="1" height="1" fill="#000"/><rect x="0" y="3" width="2" height="1" fill="#000"/><rect x="2" y="3" width="1" height="1" fill="#10f0f8"/><rect x="3" y="3" width="1" height="1" fill="#000"/><rect x="4" y="3" width="4" height="1" fill="#fff"/><rect x="8" y="3" width="6" height="1" fill="#000"/><rect x="0" y="4" width="2" height="1" fill="#000"/><rect x="2" y="4" width="1" height="1" fill="#10f0f8"/><rect x="3" y="4" width="1" height="1" fill="#000"/><rect x="4" y="4" width="3" height="1" fill="#fff"/><rect x="7" y="4" width="1" height="1" fill="#000"/><rect x="8" y="4" width="4" height="1" fill="#fff"/><rect x="12" y="4" width="1" height="1" fill="#000"/><rect x="0" y="5" width="2" height="1" fill="#000"/><rect x="2" y="5" width="1" height="1" fill="#e0b0b0"/><rect x="3" y="5" width="1" height="1" fill="#000"/><rect x="4" y="5" width="4" height="1" fill="#fff"/><rect x="8" y="5" width="4" height="1" fill="#000"/><rect x="0" y="6" width="2" height="1" fill="#000"/><rect x="3" y="6" width="1" height="1" fill="#000"/><rect x="4" y="6" width="2" height="1" fill="#fff"/><rect x="6" y="6" width="1" height="1" fill="#000"/><rect x="7" y="6" width="4" height="1" fill="#fff"/><rect x="11" y="6" width="1" height="1" fill="#000"/><rect x="0" y="7" width="2" height="1" fill="#000"/><rect x="4" y="7" width="7" height="1" fill="#000"/></svg>
<div class="cb" style="left:221px;top:544px"></div>
<div class="t" style="left:239px;top:544px;color:#800080"><span class="c">相关单号</span></div>
<div class="inp" style="left:294px;top:539px;width:164px;height:21px;font-size:11px"></div>
<div class="cb" style="left:221px;top:570px"></div>
<div class="t" style="left:239px;top:570px;color:#800000"><span class="c">相关项目</span></div>
<div class="inp lb" style="left:294px;top:566px;width:146px;height:21px"><div class="btn"></div></div>
<svg class="a" style="left:443px;top:573px" width="16" height="8" viewBox="0 0 16 8" shape-rendering="crispEdges"><rect x="0" y="0" width="2" height="1" fill="#000"/><rect x="4" y="0" width="9" height="1" fill="#000"/><rect x="0" y="1" width="4" height="1" fill="#000"/><rect x="4" y="1" width="4" height="1" fill="#fff"/><rect x="8" y="1" width="2" height="1" fill="#000"/><rect x="10" y="1" width="2" height="1" fill="#fff"/><rect x="12" y="1" width="2" height="1" fill="#000"/><rect x="0" y="2" width="2" height="1" fill="#000"/><rect x="2" y="2" width="1" height="1" fill="#10f0f8"/><rect x="3" y="2" width="1" height="1" fill="#000"/><rect x="4" y="2" width="3" height="1" fill="#fff"/><rect x="7" y="2" width="1" height="1" fill="#000"/><rect x="8" y="2" width="6" height="1" fill="#fff"/><rect x="14" y="2" width="1" height="1" fill="#000"/><rect x="0" y="3" width="2" height="1" fill="#000"/><rect x="2" y="3" width="1" height="1" fill="#10f0f8"/><rect x="3" y="3" width="1" height="1" fill="#000"/><rect x="4" y="3" width="4" height="1" fill="#fff"/><rect x="8" y="3" width="6" height="1" fill="#000"/><rect x="0" y="4" width="2" height="1" fill="#000"/><rect x="2" y="4" width="1" height="1" fill="#10f0f8"/><rect x="3" y="4" width="1" height="1" fill="#000"/><rect x="4" y="4" width="3" height="1" fill="#fff"/><rect x="7" y="4" width="1" height="1" fill="#000"/><rect x="8" y="4" width="4" height="1" fill="#fff"/><rect x="12" y="4" width="1" height="1" fill="#000"/><rect x="0" y="5" width="2" height="1" fill="#000"/><rect x="2" y="5" width="1" height="1" fill="#e0b0b0"/><rect x="3" y="5" width="1" height="1" fill="#000"/><rect x="4" y="5" width="4" height="1" fill="#fff"/><rect x="8" y="5" width="4" height="1" fill="#000"/><rect x="0" y="6" width="2" height="1" fill="#000"/><rect x="3" y="6" width="1" height="1" fill="#000"/><rect x="4" y="6" width="2" height="1" fill="#fff"/><rect x="6" y="6" width="1" height="1" fill="#000"/><rect x="7" y="6" width="4" height="1" fill="#fff"/><rect x="11" y="6" width="1" height="1" fill="#000"/><rect x="0" y="7" width="2" height="1" fill="#000"/><rect x="4" y="7" width="7" height="1" fill="#000"/></svg>
<div class="cb" style="left:221px;top:599px"></div>
<div class="t" style="left:239px;top:599px;color:#800000"><span class="c">车</span></div>
<div class="t" style="left:275px;top:599px;color:#800000"><span class="c">间</span></div>
<div class="inp lb" style="left:294px;top:595px;width:146px;height:21px"><div class="btn"></div></div>
<svg class="a" style="left:443px;top:602px" width="16" height="8" viewBox="0 0 16 8" shape-rendering="crispEdges"><rect x="0" y="0" width="2" height="1" fill="#000"/><rect x="4" y="0" width="9" height="1" fill="#000"/><rect x="0" y="1" width="4" height="1" fill="#000"/><rect x="4" y="1" width="4" height="1" fill="#fff"/><rect x="8" y="1" width="2" height="1" fill="#000"/><rect x="10" y="1" width="2" height="1" fill="#fff"/><rect x="12" y="1" width="2" height="1" fill="#000"/><rect x="0" y="2" width="2" height="1" fill="#000"/><rect x="2" y="2" width="1" height="1" fill="#10f0f8"/><rect x="3" y="2" width="1" height="1" fill="#000"/><rect x="4" y="2" width="3" height="1" fill="#fff"/><rect x="7" y="2" width="1" height="1" fill="#000"/><rect x="8" y="2" width="6" height="1" fill="#fff"/><rect x="14" y="2" width="1" height="1" fill="#000"/><rect x="0" y="3" width="2" height="1" fill="#000"/><rect x="2" y="3" width="1" height="1" fill="#10f0f8"/><rect x="3" y="3" width="1" height="1" fill="#000"/><rect x="4" y="3" width="4" height="1" fill="#fff"/><rect x="8" y="3" width="6" height="1" fill="#000"/><rect x="0" y="4" width="2" height="1" fill="#000"/><rect x="2" y="4" width="1" height="1" fill="#10f0f8"/><rect x="3" y="4" width="1" height="1" fill="#000"/><rect x="4" y="4" width="3" height="1" fill="#fff"/><rect x="7" y="4" width="1" height="1" fill="#000"/><rect x="8" y="4" width="4" height="1" fill="#fff"/><rect x="12" y="4" width="1" height="1" fill="#000"/><rect x="0" y="5" width="2" height="1" fill="#000"/><rect x="2" y="5" width="1" height="1" fill="#e0b0b0"/><rect x="3" y="5" width="1" height="1" fill="#000"/><rect x="4" y="5" width="4" height="1" fill="#fff"/><rect x="8" y="5" width="4" height="1" fill="#000"/><rect x="0" y="6" width="2" height="1" fill="#000"/><rect x="3" y="6" width="1" height="1" fill="#000"/><rect x="4" y="6" width="2" height="1" fill="#fff"/><rect x="6" y="6" width="1" height="1" fill="#000"/><rect x="7" y="6" width="4" height="1" fill="#fff"/><rect x="11" y="6" width="1" height="1" fill="#000"/><rect x="0" y="7" width="2" height="1" fill="#000"/><rect x="4" y="7" width="7" height="1" fill="#000"/></svg>
<div class="cb" style="left:221px;top:628px"></div>
<div class="t" style="left:239px;top:628px;color:#800080"><span class="c">明细备注</span></div>
<div class="inp" style="left:294px;top:623px;width:164px;height:21px;font-size:11px"></div>
<div class="cb" style="left:221px;top:656px"></div>
<div class="t" style="left:239px;top:656px;color:#800080"><span class="c">批次编号</span></div>
<div class="inp" style="left:294px;top:651px;width:164px;height:21px;font-size:11px"></div>
<div class="cb" style="left:221px;top:684px"></div>
<div class="t" style="left:239px;top:684px;color:#800080"><span class="c">单据备注</span></div>
<div class="inp" style="left:294px;top:679px;width:164px;height:21px;font-size:11px"></div>
<div class="cb" style="left:221px;top:710px"></div>
<div class="t" style="left:239px;top:710px;color:#800000"><span class="c">制</span></div>
<div class="t" style="left:256px;top:710px;color:#800000"><span class="c">单</span></div>
<div class="t" style="left:273px;top:710px;color:#800000"><span class="c">员</span></div>
<div class="inp lb" style="left:294px;top:706px;width:146px;height:21px"><div class="btn"></div></div>
<svg class="a" style="left:443px;top:713px" width="16" height="8" viewBox="0 0 16 8" shape-rendering="crispEdges"><rect x="0" y="0" width="2" height="1" fill="#000"/><rect x="4" y="0" width="9" height="1" fill="#000"/><rect x="0" y="1" width="4" height="1" fill="#000"/><rect x="4" y="1" width="4" height="1" fill="#fff"/><rect x="8" y="1" width="2" height="1" fill="#000"/><rect x="10" y="1" width="2" height="1" fill="#fff"/><rect x="12" y="1" width="2" height="1" fill="#000"/><rect x="0" y="2" width="2" height="1" fill="#000"/><rect x="2" y="2" width="1" height="1" fill="#10f0f8"/><rect x="3" y="2" width="1" height="1" fill="#000"/><rect x="4" y="2" width="3" height="1" fill="#fff"/><rect x="7" y="2" width="1" height="1" fill="#000"/><rect x="8" y="2" width="6" height="1" fill="#fff"/><rect x="14" y="2" width="1" height="1" fill="#000"/><rect x="0" y="3" width="2" height="1" fill="#000"/><rect x="2" y="3" width="1" height="1" fill="#10f0f8"/><rect x="3" y="3" width="1" height="1" fill="#000"/><rect x="4" y="3" width="4" height="1" fill="#fff"/><rect x="8" y="3" width="6" height="1" fill="#000"/><rect x="0" y="4" width="2" height="1" fill="#000"/><rect x="2" y="4" width="1" height="1" fill="#10f0f8"/><rect x="3" y="4" width="1" height="1" fill="#000"/><rect x="4" y="4" width="3" height="1" fill="#fff"/><rect x="7" y="4" width="1" height="1" fill="#000"/><rect x="8" y="4" width="4" height="1" fill="#fff"/><rect x="12" y="4" width="1" height="1" fill="#000"/><rect x="0" y="5" width="2" height="1" fill="#000"/><rect x="2" y="5" width="1" height="1" fill="#e0b0b0"/><rect x="3" y="5" width="1" height="1" fill="#000"/><rect x="4" y="5" width="4" height="1" fill="#fff"/><rect x="8" y="5" width="4" height="1" fill="#000"/><rect x="0" y="6" width="2" height="1" fill="#000"/><rect x="3" y="6" width="1" height="1" fill="#000"/><rect x="4" y="6" width="2" height="1" fill="#fff"/><rect x="6" y="6" width="1" height="1" fill="#000"/><rect x="7" y="6" width="4" height="1" fill="#fff"/><rect x="11" y="6" width="1" height="1" fill="#000"/><rect x="0" y="7" width="2" height="1" fill="#000"/><rect x="4" y="7" width="7" height="1" fill="#000"/></svg>
<div class="a" style="left:465px;top:199px;width:50px;height:22px;background:#f6e4ee;border:1px solid #a6c8a6"></div>
<div class="t" style="left:465px;top:203px;width:49px;text-align:center;color:#000080">−</div>
<div class="a" style="left:465px;top:220px;width:50px;height:23px;background:#deece6;border:1px solid #a6c8a6"></div>
<div class="t" style="left:465px;top:225px;width:49px;text-align:center;color:#000080">1</div>
<div class="a" style="left:514px;top:199px;width:121px;height:22px;background:#deece6;border:1px solid #a6c8a6"></div>
<div class="t" style="left:514px;top:203px;width:120px;text-align:center;color:#000080"><span class="c">单据编号</span></div>
<div class="a" style="left:514px;top:220px;width:121px;height:23px;background:#c0fcdc;border:1px solid #a6c8a6"></div>
<div class="t" style="left:518px;top:225px;color:#000">HA-15-08-04-0001</div>
<div class="a" style="left:634px;top:199px;width:81px;height:22px;background:#deece6;border:1px solid #a6c8a6"></div>
<div class="t" style="left:634px;top:203px;width:80px;text-align:center;color:#000080"><span class="c">单据日期</span></div>
<div class="a" style="left:634px;top:220px;width:81px;height:23px;background:#5a62ea;border:1px solid #a6c8a6"></div>
<div class="t" style="left:638px;top:225px;color:#fff">2015-08-04</div>
<div class="a" style="left:714px;top:199px;width:61px;height:22px;background:#deece6;border:1px solid #a6c8a6"></div>
<div class="t" style="left:714px;top:203px;width:60px;text-align:center;color:#000080"><span class="c">单据状态</span></div>
<div class="a" style="left:714px;top:220px;width:61px;height:23px;background:#c0fcdc;border:1px solid #a6c8a6"></div>
<div class="t" style="left:718px;top:225px;color:#000"><span class="c">已审核</span></div>
<div class="a" style="left:774px;top:199px;width:102px;height:22px;background:#deece6;border:1px solid #a6c8a6"></div>
<div class="t" style="left:774px;top:203px;width:101px;text-align:center;color:#000080"><span class="c">备注信息</span></div>
<div class="a" style="left:774px;top:220px;width:102px;height:23px;background:#c0fcdc;border:1px solid #a6c8a6"></div>
<div class="a" style="left:875px;top:199px;width:60px;height:22px;background:#deece6;border:1px solid #a6c8a6"></div>
<div class="t" style="left:875px;top:203px;width:59px;text-align:center;color:#000080"><span class="c">打印次数</span></div>
<div class="a" style="left:875px;top:220px;width:60px;height:23px;background:#c0fcdc;border:1px solid #a6c8a6"></div>
<div class="t" style="left:879px;top:225px;color:#000">0</div>
<div class="a" style="left:934px;top:199px;width:81px;height:22px;background:#deece6;border:1px solid #a6c8a6"></div>
<div class="t" style="left:934px;top:203px;width:80px;text-align:center;color:#000080"><span class="c">单据金额</span></div>
<div class="a" style="left:934px;top:220px;width:81px;height:23px;background:#c0fcdc;border:1px solid #a6c8a6"></div>
<div class="t" style="left:934px;top:225px;width:77px;text-align:right;color:#000">5130000</div>
<div class="a" style="left:1014px;top:199px;width:81px;height:22px;background:#deece6;border:1px solid #a6c8a6"></div>
<div class="t" style="left:1014px;top:203px;width:80px;text-align:center;color:#000080"><span class="c">交付期限</span></div>
<div class="a" style="left:1014px;top:220px;width:81px;height:23px;background:#c0fcdc;border:1px solid #a6c8a6"></div>
<div class="t" style="left:1018px;top:225px;color:#000">2015-08-04</div>
<div class="t" style="left:675px;top:441px;color:#e83030;font-size:16px;line-height:18px;letter-spacing:-0.2px">如果添加</div>
<div class="t" style="left:744px;top:441px;color:#e83030;font-size:16px;line-height:18px;letter-spacing:-0.2px">“</div>
<div class="t" style="left:750px;top:441px;color:#e83030;font-size:16px;line-height:18px;letter-spacing:-0.2px">用于组成物资的引用</div>
<div class="t" style="left:892px;top:441px;color:#e83030;font-size:16px;line-height:18px;letter-spacing:-0.2px">”</div>
<div class="t" style="left:897px;top:441px;color:#e83030;font-size:16px;line-height:18px;letter-spacing:-0.2px">，</div>
<div class="t" style="left:916px;top:441px;color:#e83030;font-size:16px;line-height:18px;letter-spacing:-0.2px;letter-spacing:0.2px">就可以解决这个问题了</div>
<div class="a" style="left:465px;top:505px;width:830px;height:17px;background:#f0f0f0;border-bottom:1px solid #a09a94"></div>
<div class="a" style="left:465px;top:522px;width:830px;height:1px;background:#a8cef2"></div>
<svg class="a" style="left:469px;top:508px" width="8" height="10" viewBox="0 0 8 10"><path d="M6.5 1L2 5L6.5 9" stroke="#444" stroke-width="2.2" fill="none"/></svg>
<div class="a" style="left:482px;top:505px;width:17px;height:15px;background:#cdcdcd"></div>
<div class="a" style="left:465px;top:524px;width:50px;height:22px;background:#f6e4ee;border:1px solid #a6c8a6"></div>
<div class="t" style="left:465px;top:528px;width:49px;text-align:center;color:#000080">−</div>
<div class="a" style="left:465px;top:545px;width:50px;height:23px;background:#deece6;border:1px solid #a6c8a6"></div>
<div class="t" style="left:465px;top:550px;width:49px;text-align:center;color:#000080">1</div>
<div class="a" style="left:514px;top:524px;width:35px;height:22px;background:#deece6;border:1px solid #a6c8a6"></div>
<div class="t" style="left:514px;top:528px;width:34px;text-align:center;color:#000080"><span class="c">标志</span></div>
<div class="a" style="left:514px;top:545px;width:35px;height:23px;background:#c0fcdc;border:1px solid #a6c8a6"></div>
<div class="a" style="left:548px;top:524px;width:131px;height:22px;background:#deece6;border:1px solid #a6c8a6"></div>
<div class="t" style="left:548px;top:528px;width:130px;text-align:center;color:#000080"><span class="c">名称</span></div>
<div class="a" style="left:548px;top:545px;width:131px;height:23px;background:#fffcc0;border:1px solid #a6c8a6"></div>
<div class="t" style="left:552px;top:550px;color:#000"><span class="c">小型机</span>-XG-NG</div>
<div class="a" style="left:678px;top:524px;width:91px;height:22px;background:#deece6;border:1px solid #a6c8a6"></div>
<div class="t" style="left:678px;top:528px;width:90px;text-align:center;color:#000080"><span class="c">产品代码</span></div>
<div class="a" style="left:678px;top:545px;width:91px;height:23px;background:#fffcc0;border:1px solid #a6c8a6"></div>
<div class="t" style="left:682px;top:550px;color:#000">XXJ</div>
<div class="a" style="left:768px;top:524px;width:41px;height:22px;background:#deece6;border:1px solid #a6c8a6"></div>
<div class="t" style="left:768px;top:528px;width:40px;text-align:center;color:#000080"><span class="c">单位</span></div>
<div class="a" style="left:768px;top:545px;width:41px;height:23px;background:#fffcc0;border:1px solid #a6c8a6"></div>
<div class="t" style="left:772px;top:550px;color:#000"><span class="c">个</span></div>
<div class="a" style="left:808px;top:524px;width:61px;height:22px;background:#deece6;border:1px solid #a6c8a6"></div>
<div class="t" style="left:808px;top:528px;width:60px;text-align:center;color:#000080"><span class="c">数量</span></div>
<div class="a" style="left:808px;top:545px;width:61px;height:23px;background:#fffcc0;border:1px solid #a6c8a6"></div>
<div class="t" style="left:808px;top:550px;width:57px;text-align:right;color:#000">100</div>
<div class="a" style="left:868px;top:524px;width:61px;height:22px;background:#deece6;border:1px solid #a6c8a6"></div>
<div class="t" style="left:868px;top:528px;width:60px;text-align:center;color:#000080"><span class="c">已引量</span></div>
<div class="a" style="left:868px;top:545px;width:61px;height:23px;background:#fffcc0;border:1px solid #a6c8a6"></div>
<div class="t" style="left:868px;top:550px;width:57px;text-align:right;color:#000">100</div>
<div class="a" style="left:928px;top:524px;width:61px;height:22px;background:#deece6;border:1px solid #a6c8a6"></div>
<div class="t" style="left:928px;top:528px;width:60px;text-align:center;color:#000080"><span class="c">剩余量</span></div>
<div class="a" style="left:928px;top:545px;width:61px;height:23px;background:#fffcc0;border:1px solid #a6c8a6"></div>
<div class="t" style="left:928px;top:550px;width:57px;text-align:right;color:#000">0</div>
<div class="a" style="left:988px;top:524px;width:61px;height:22px;background:#deece6;border:1px solid #a6c8a6"></div>
<div class="t" style="left:988px;top:528px;width:60px;text-align:center;color:#000080"><span class="c">本次引</span></div>
<div class="a" style="left:988px;top:545px;width:61px;height:23px;background:#c0fcdc;border:1px solid #a6c8a6"></div>
<div class="a" style="left:1048px;top:524px;width:61px;height:22px;background:#deece6;border:1px solid #a6c8a6"></div>
<div class="t" style="left:1048px;top:528px;width:60px;text-align:center;color:#000080"><span class="c">批次编号</span></div>
<div class="a" style="left:1048px;top:545px;width:61px;height:23px;background:#c0fcdc;border:1px solid #a6c8a6"></div>
<div class="t" style="left:1052px;top:550px;color:#000">-</div>
<div class="a" style="left:1108px;top:524px;width:61px;height:22px;background:#deece6;border:1px solid #a6c8a6"></div>
<div class="t" style="left:1108px;top:528px;width:60px;text-align:center;color:#000080"><span class="c">辅量</span></div>
<div class="a" style="left:1108px;top:545px;width:61px;height:23px;background:#fffcc0;border:1px solid #a6c8a6"></div>
<div class="t" style="left:1108px;top:550px;width:57px;text-align:right;color:#000">0</div>
<div class="a" style="left:1168px;top:524px;width:61px;height:22px;background:#deece6;border:1px solid #a6c8a6"></div>
<div class="t" style="left:1168px;top:528px;width:60px;text-align:center;color:#000080"><span class="c">已引辅量</span></div>
<div class="a" style="left:1168px;top:545px;width:61px;height:23px;background:#fffcc0;border:1px solid #a6c8a6"></div>
<div class="t" style="left:1168px;top:550px;width:57px;text-align:right;color:#000">0</div>
<div class="a" style="left:1228px;top:524px;width:61px;height:22px;background:#deece6;border:1px solid #a6c8a6"></div>
<div class="t" style="left:1232px;top:528px;color:#000080"><span class="c">本次引辅量</span></div>
<div class="a" style="left:1228px;top:545px;width:61px;height:23px;background:#c0fcdc;border:1px solid #a6c8a6"></div>
<div class="a" style="left:866px;top:507px;width:66px;height:74px;border:1px solid #e04848;border-radius:50%"></div>
</body></html>
